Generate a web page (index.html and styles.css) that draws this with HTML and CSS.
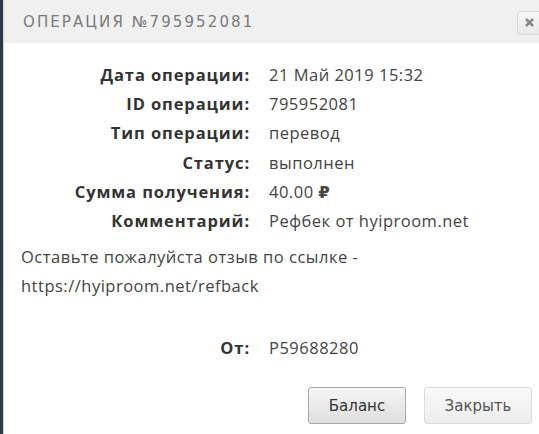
FILE: index.html
```html
<!DOCTYPE html>
<html lang="ru">
<head>
<meta charset="utf-8">
<link rel="stylesheet" href="styles.css">
</head>
<body>
<div class="page">
  <div class="modal">
    <div class="modal-header">
      <span class="title">ОПЕРАЦИЯ №795952081</span>
      <button class="close-btn" aria-label="close">
        <svg width="11" height="11" viewBox="0 0 11 11"><path d="M2 2 L9 9 M9 2 L2 9" stroke="#888" stroke-width="2.6" stroke-linecap="butt"/></svg>
      </button>
    </div>
    <div class="modal-body">
      <div class="info">
        <div class="label">Дата операции:</div><div class="value">21 Май 2019 15:32</div>
        <div class="label">ID операции:</div><div class="value">795952081</div>
        <div class="label">Тип операции:</div><div class="value">перевод</div>
        <div class="label">Статус:</div><div class="value">выполнен</div>
        <div class="label">Сумма получения:</div><div class="value">40.00 <span class="rub">₽</span></div>
        <div class="label">Комментарий:</div><div class="value">Рефбек от hyiproom.net</div>
      </div>
      <p class="note">Оставьте пожалуйста отзыв по ссылке -<br>https://hyiproom.net/refback</p>
      <div class="info from">
        <div class="label">От:</div><div class="value">P59688280</div>
      </div>
    </div>
    <div class="modal-footer">
      <button class="btn btn-primary">Баланс</button>
      <button class="btn btn-light">Закрыть</button>
    </div>
  </div>
</div>
</body>
</html>
```
FILE: styles.css
```css
html, body {
  margin: 0;
  padding: 0;
  height: 100%;
}
body {
  background: #2f3a40;
  overflow: hidden;
}
.page {
  display: flex;
  height: 100%;
  padding-left: 3px;
}
.modal {
  flex: 1;
  display: flex;
  flex-direction: column;
  background: #fff;
  border-left: 1px solid #cfd4d6;
  font-family: "Open Sans", "DejaVu Sans", sans-serif;
  color: #333;
}
.modal-header {
  height: 43px;
  background: #f0f0f0;
  display: flex;
  align-items: center;
  justify-content: space-between;
  padding-left: 19px;
  box-sizing: border-box;
}
.title {
  font-family: "DejaVu Sans", sans-serif;
  font-size: 15px;
  letter-spacing: 2.1px;
  color: #7a7a7a;
  padding-top: 1px;
}
.close-btn {
  width: 24px;
  height: 24px;
  margin-right: -2px;
  margin-top: 2px;
  border: 1px solid #d8d8d8;
  border-radius: 3px;
  background: linear-gradient(#f7f7f7, #e9e9e9);
  display: flex;
  align-items: center;
  justify-content: center;
  padding: 0;
}
.modal-body {
  padding: 17px 0 0 17px;
  font-size: 16.5px;
  letter-spacing: 0.5px;
  line-height: 29.2px;
  flex: 1;
}
.info {
  display: grid;
  grid-template-columns: 229px 1fr;
  column-gap: 19px;
}
.label {
  text-align: right;
  font-weight: 700;
  letter-spacing: 0.9px;
  color: #333;
}
.value {
  color: #444;
}
.rub {
  font-weight: 700;
}
.note {
  margin: 7px 0 0;
  color: #444;
}
.from {
  margin-top: 32px;
}
.modal-footer {
  display: flex;
  justify-content: flex-end;
  gap: 18px;
  padding: 0 7px 10px 0;
}
.btn {
  font-family: "DejaVu Sans", sans-serif;
  font-size: 15px;
  letter-spacing: 0;
  height: 37px;
  border-radius: 3px;
  padding: 0;
  color: #333;
}
.btn-primary {
  width: 98px;
  border: 1px solid #a8a8a8;
  background: linear-gradient(#f6f6f6, #dedede);
}
.btn-light {
  width: 108px;
  border: 1px solid #dcdcdc;
  background: linear-gradient(#f9f9f9, #ececec);
  color: #555;
}
```
